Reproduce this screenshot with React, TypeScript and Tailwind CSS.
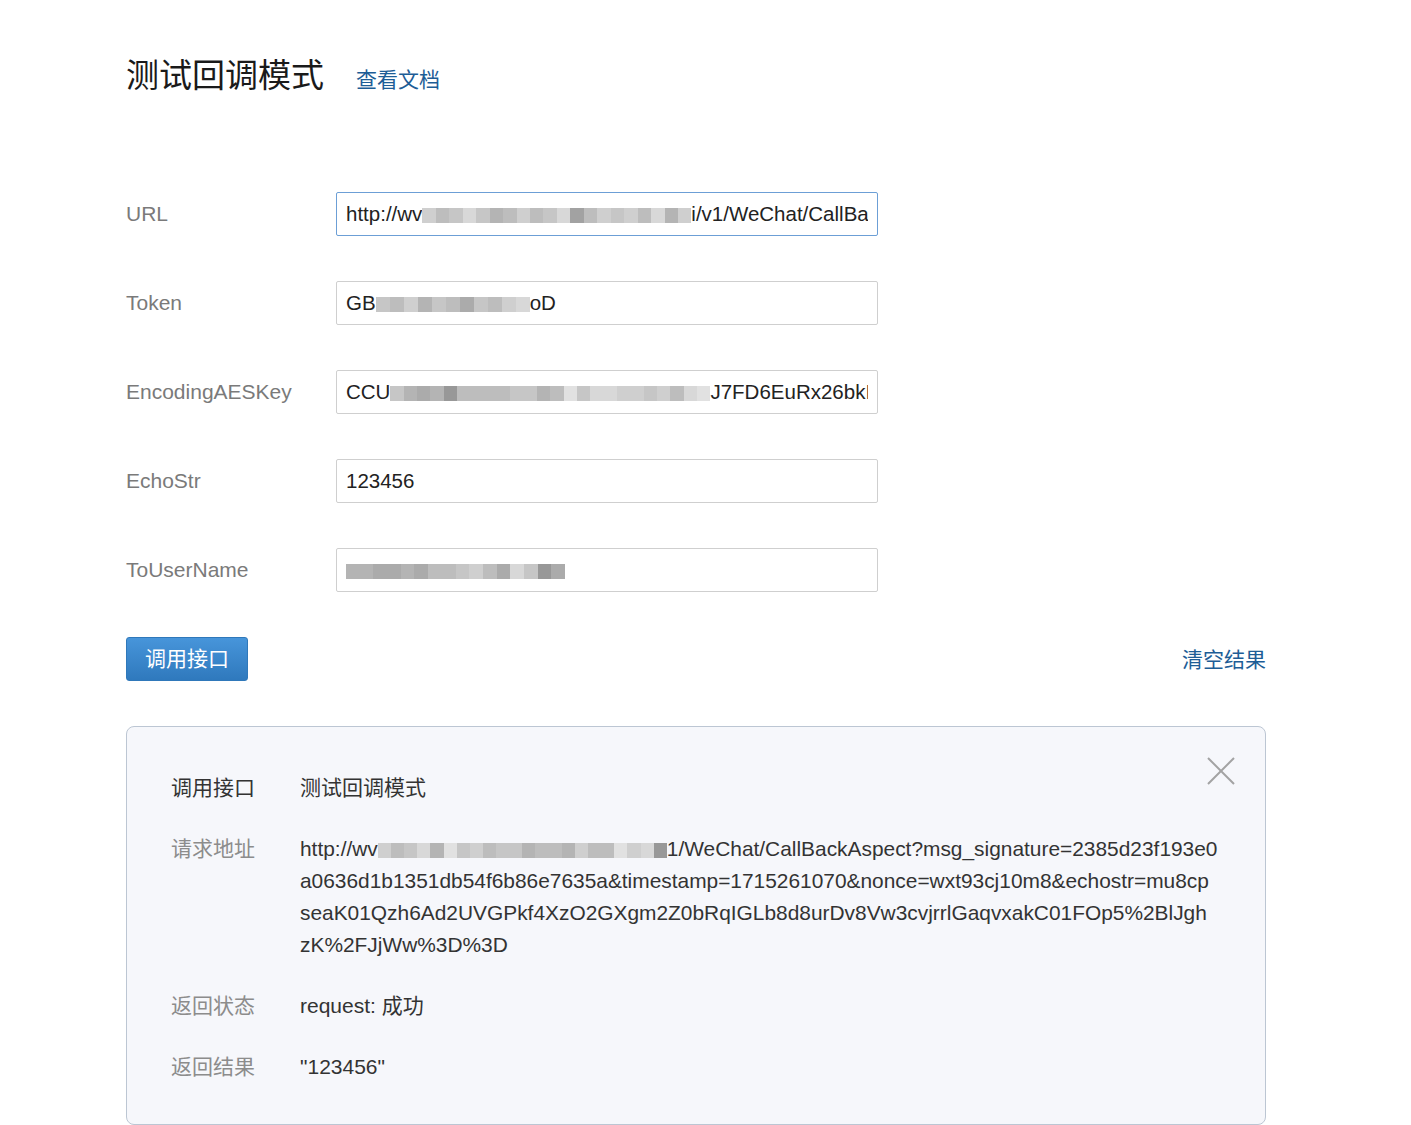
import React from 'react'

const FONT = { fontFamily: '"Liberation Sans", Arial, "Noto Sans CJK SC", sans-serif' }

const SHADES = ['#989898', '#a2a2a2', '#ababab', '#b4b4b4', '#bdbdbd', '#c6c6c6', '#cfcfcf', '#d8d8d8', '#e1e1e1', '#eaeaea']

// pixelated redaction, like the mosaic in the screenshot
function Blur({ cells, width }: { cells: string; width: number }) {
  return (
    <span className="inline-flex h-[15px] align-[-2px]" style={{ width }}>
      {cells.split('').map((c, i) => (
        <span key={i} className="flex-1 h-full" style={{ background: SHADES[Number(c)] }} />
      ))}
    </span>
  )
}

const FIELDS: { label: string; focused?: boolean; value: React.ReactNode }[] = [
  {
    label: 'URL',
    focused: true,
    value: (
      <>
        http://wv<Blur cells="64575346457146564736" width={269} />i/v1/WeChat/CallBa
      </>
    ),
  },
  {
    label: 'Token',
    value: (
      <>
        GB<Blur cells="54635425467" width={154} />oD
      </>
    ),
  },
  {
    label: 'EncodingAESKey',
    value: (
      <>
        CCU<Blur cells="532304444553485776656478" width={320} />J7FD6EuRx26bkI
      </>
    ),
  },
  { label: 'EchoStr', value: '123456' },
  {
    label: 'ToUserName',
    value: <Blur cells="3322324456427502" width={219} />,
  },
]

export default function App() {
  return (
    <div className="min-h-screen bg-white text-[#333] pl-[126px] pt-[56px] pb-[1px]" style={FONT}>
      {/* Header */}
      <div className="flex items-center h-[40px]">
        <h1 className="text-[33px] leading-[40px] text-[#1a1a1a]">测试回调模式</h1>
        <a className="ml-[32px] text-[21px] text-[#1d5d96] mt-[7px]">查看文档</a>
      </div>

      {/* Form */}
      <div className="mt-[96px] flex flex-col gap-[45px]">
        {FIELDS.map(f => (
          <div key={f.label} className="flex items-center">
            <span className="w-[210px] shrink-0 text-[21px] text-[#7a7a7a]">{f.label}</span>
            <div
              className={`w-[542px] h-[44px] border rounded-[2px] bg-white px-[9px] flex items-center ${
                f.focused ? 'border-[#6c9fd6]' : 'border-[#cfcfcf]'
              }`}
            >
              <div className="overflow-hidden whitespace-nowrap text-[20.5px] text-[#222] w-full">{f.value}</div>
            </div>
          </div>
        ))}
      </div>

      {/* Actions */}
      <div className="mt-[45px] w-[1140px] flex items-center justify-between">
        <button className="w-[122px] h-[44px] rounded-[3px] border border-[#2f78ba] bg-gradient-to-b from-[#4795da] to-[#2f79bd] text-white text-[21px]">
          调用接口
        </button>
        <a className="text-[21px] text-[#1d5d96] mt-[2px]">清空结果</a>
      </div>

      {/* Result */}
      <div className="relative mt-[45px] w-[1140px] border border-[#bcc6d3] rounded-[8px] bg-[#f6f7fb] pl-[44px] pt-[45px] pb-[41px] text-[21px] leading-[32px]">
        <button aria-label="close" className="absolute top-[30px] right-[30px] w-[28px] h-[28px]">
          <svg viewBox="0 0 28 28" className="w-full h-full" fill="none" stroke="#a3a3a3" strokeWidth="2">
            <path d="M1 1L27 27M27 1L1 27" />
          </svg>
        </button>
        <div className="flex flex-col gap-[29px]">
          <div className="flex">
            <span className="w-[129px] shrink-0 text-[#333]">调用接口</span>
            <span className="text-[#333]">测试回调模式</span>
          </div>
          <div className="flex">
            <span className="w-[129px] shrink-0 text-[#8c8c8c]">请求地址</span>
            <div className="text-[#333] whitespace-nowrap text-[20.9px]">
              <div>
                http://wv<Blur cells="6457385645534436448670" width={289} />1/WeChat/CallBackAspect?msg_signature=2385d23f193e0
              </div>
              <div>a0636d1b1351db54f6b86e7635a&amp;timestamp=1715261070&amp;nonce=wxt93cj10m8&amp;echostr=mu8cp</div>
              <div>seaK01Qzh6Ad2UVGPkf4XzO2GXgm2Z0bRqIGLb8d8urDv8Vw3cvjrrlGaqvxakC01FOp5%2BlJgh</div>
              <div>zK%2FJjWw%3D%3D</div>
            </div>
          </div>
          <div className="flex">
            <span className="w-[129px] shrink-0 text-[#8c8c8c]">返回状态</span>
            <span className="text-[#333]">request: 成功</span>
          </div>
          <div className="flex">
            <span className="w-[129px] shrink-0 text-[#8c8c8c]">返回结果</span>
            <span className="text-[#333]">"123456"</span>
          </div>
        </div>
      </div>
    </div>
  )
}
